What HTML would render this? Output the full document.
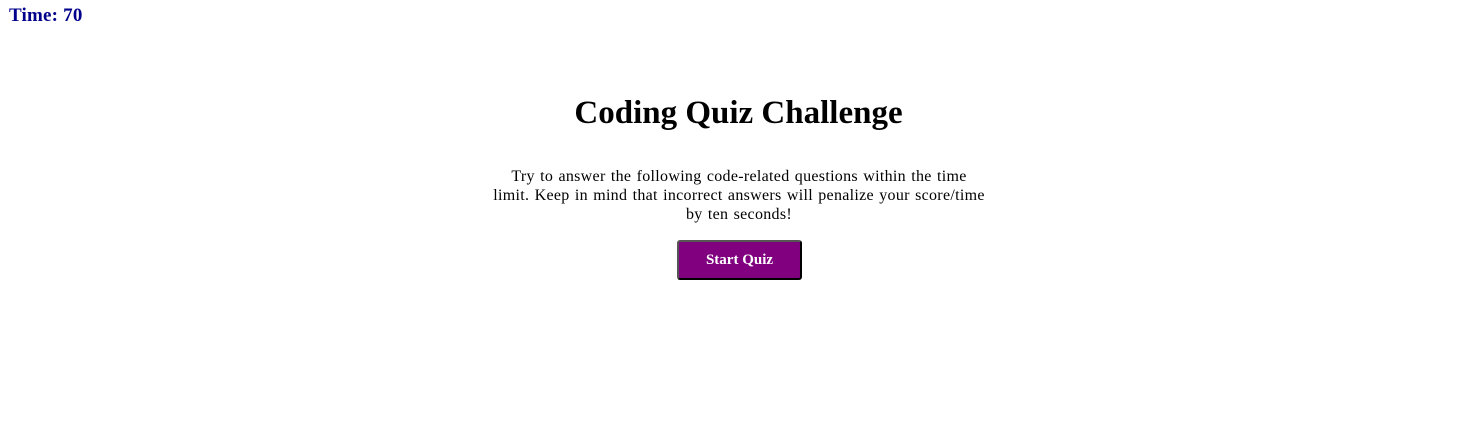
<!DOCTYPE html>
<html><head><style>
body{margin:0;width:1477px;height:446px;background:#fff;font-family:"Liberation Serif","DejaVu Serif",serif;position:relative;overflow:hidden}
.time{position:absolute;left:9px;top:5px;color:#00008b;font-weight:bold;font-size:19px;letter-spacing:0.2px}
h1{position:absolute;left:0;width:1477px;top:95px;margin:0;text-align:center;font-size:33px;font-weight:bold;color:#000}
p{position:absolute;left:439px;width:600px;top:167px;margin:0;text-align:center;font-size:16px;line-height:19px;color:#000;letter-spacing:0.3px;word-spacing:1px}
.btn{position:absolute;left:677px;top:240px;width:121px;height:36px;background:#800080;color:#fff;font-weight:bold;font-size:15px;text-align:center;line-height:36px;border:2px outset #555;border-radius:3px}
</style></head><body>
<div class="time">Time: 70</div>
<h1>Coding Quiz Challenge</h1>
<p>Try to answer the following code-related questions within the time<br>limit. Keep in mind that incorrect answers will penalize your score/time<br>by ten seconds!</p>
<div class="btn">Start Quiz</div>
</body></html>
